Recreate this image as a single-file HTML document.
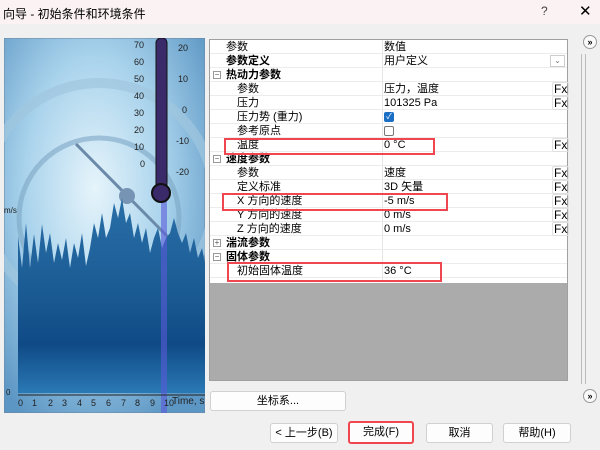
<!DOCTYPE html>
<html><head><meta charset="utf-8"><style>
*{margin:0;padding:0;box-sizing:border-box}
body{width:600px;height:450px;background:#f0f0f0;font-family:"Liberation Sans","Noto Sans CJK SC",sans-serif;font-size:11px;color:#000;position:relative;overflow:hidden}
.abs{position:absolute}
.title{left:0;top:0;width:600px;height:24px;background:#fbf3f3}
.grid{left:209px;top:39px;width:359px;height:342px;background:#fff;border:1px solid #a0a0a0}
.row{position:absolute;left:0;width:357px;height:14px;border-bottom:1px solid #ececec;line-height:14px}
.row .n{position:absolute;left:16px}
.row .v{position:absolute;left:174px}
.fx{position:absolute;left:342px;top:0;font-size:12px;line-height:13px;border:1px solid #e0e0e0;border-radius:2px;padding:0 1px;height:14px}
.col{position:absolute;left:172px;top:0;width:1px;height:240px;background:#e6e6e6}
.gray{position:absolute;left:0;top:243px;width:357px;height:97px;background:#ababab}
.b{font-weight:bold}
.btn{position:absolute;background:#fdfdfd;border:1px solid #d0d0d0;border-radius:3px;text-align:center;line-height:19px;font-size:11px}
.red{position:absolute;border:2px solid #f0464f}
.pm{position:absolute;left:3px;top:3px;width:8px;height:8px;border:1px solid #999;font-size:8px;line-height:6px;text-align:center;color:#555}
.circ{position:absolute;width:14px;height:14px;border:1px solid #999;border-radius:50%;font-size:9px;line-height:12px;text-align:center;background:#fafafa;font-weight:bold}
</style></head><body>
<div class="abs title"></div>
<div class="abs" style="left:3px;top:5px;font-size:12px">向导 - 初始条件和环境条件</div>
<div class="abs" style="left:541px;top:4px;font-size:12px;color:#444">?</div>
<div class="abs" style="left:579px;top:2px;font-size:15px">✕</div>

<svg class="abs" style="left:4px;top:38px" width="201" height="375" viewBox="0 0 201 375">
<defs>
<radialGradient id="g" cx="0.45" cy="0.4" r="0.7"><stop offset="0" stop-color="#e6f4fb"/><stop offset="0.5" stop-color="#a9d3ec"/><stop offset="1" stop-color="#5c96c4"/></radialGradient>
<linearGradient id="d" x1="0" y1="0" x2="0" y2="1"><stop offset="0" stop-color="#2a6fa8"/><stop offset="0.5" stop-color="#1a5a93"/><stop offset="0.75" stop-color="#0f4a86"/><stop offset="1" stop-color="#2a79b5"/></linearGradient>
</defs>
<rect width="201" height="375" fill="url(#g)"/>
<rect x="0" y="0" width="201" height="375" fill="none" stroke="#6b86a0"/>
<circle cx="95" cy="160" r="115" fill="none" stroke="#9fc6de" stroke-width="10" opacity=".7"/>
<circle cx="95" cy="180" r="80" fill="none" stroke="#7da6c4" stroke-width="5" opacity=".6"/>
<line x1="72" y1="106" x2="165" y2="200" stroke="#6b8aaa" stroke-width="3"/>
<circle cx="123" cy="158" r="8" fill="#7894b4"/>
<path d="M14 230 L14 198 L18 230 L22 185 L26 230 L30 196 L34 225 L38 186 L42 215 L46 195 L50 225 L54 205 L58 222 L62 200 L66 230 L70 205 L74 220 L78 195 L82 228 L86 210 L90 185 L94 200 L98 175 L102 200 L106 190 L110 165 L114 180 L118 160 L122 185 L126 175 L130 200 L134 185 L138 205 L142 190 L146 215 L150 200 L154 190 L158 210 L162 200 L166 195 L170 180 L174 195 L178 205 L182 195 L186 215 L190 200 L194 220 L198 210 L201 225 L201 355 L14 355 Z" fill="url(#d)"/>
<rect x="157" y="0" width="6" height="375" fill="#5a5ad8" opacity=".6"/>
<rect x="152" y="0" width="11" height="152" rx="5" fill="#3a2a6a" stroke="#111"/>
<circle cx="157" cy="155" r="9" fill="#3a2a6a" stroke="#111" stroke-width="2"/>
<g font-size="9" fill="#222" font-family="Liberation Sans">
<text x="130" y="10">70</text><text x="130" y="27">60</text><text x="130" y="44">50</text><text x="130" y="61">40</text><text x="130" y="78">30</text><text x="130" y="95">20</text><text x="130" y="112">10</text><text x="136" y="129">0</text>
<text x="174" y="13">20</text><text x="174" y="44">10</text><text x="178" y="75">0</text><text x="172" y="106">-10</text><text x="172" y="137">-20</text>
<text x="0" y="175" font-size="8">m/s</text>
<text x="2" y="357" font-size="8">0</text><text x="28" y="368">1</text><text x="44" y="368">2</text><text x="58" y="368">3</text><text x="73" y="368">4</text><text x="87" y="368">5</text><text x="102" y="368">6</text><text x="117" y="368">7</text><text x="131" y="368">8</text><text x="146" y="368">9</text><text x="160" y="368">10</text>
<text x="14" y="368">0</text><text x="168" y="366" font-size="10">Time, s</text>
</g>
<line x1="14" y1="357" x2="201" y2="357" stroke="#222"/>
</svg>

<div class="abs grid">
<div class="col"></div>
<div class="row" style="top:0"><span class="n">参数</span><span class="v">数值</span></div>
<div class="row" style="top:14px"><span class="n b">参数定义</span><span class="v">用户定义</span><span style="position:absolute;left:340px;top:1px;width:15px;height:12px;border:1px solid #ccc;font-size:8px;text-align:center;line-height:10px;color:#777">⌄</span></div>
<div class="row" style="top:28px"><span class="pm">−</span><span class="n b">热动力参数</span></div>
<div class="row" style="top:42px"><span class="n" style="left:27px">参数</span><span class="v">压力，温度</span><span class="fx">Fx</span></div>
<div class="row" style="top:56px"><span class="n" style="left:27px">压力</span><span class="v">101325 Pa</span><span class="fx">Fx</span></div>
<div class="row" style="top:70px"><span class="n" style="left:27px">压力势 (重力)</span><span style="position:absolute;left:174px;top:2px;width:10px;height:10px;background:#1a6fc4;border-radius:2px;color:#fff;font-size:8px;line-height:10px;text-align:center">✓</span></div>
<div class="row" style="top:84px"><span class="n" style="left:27px">参考原点</span><span style="position:absolute;left:174px;top:2px;width:10px;height:10px;border:1px solid #777;border-radius:2px"></span></div>
<div class="row" style="top:98px"><span class="n" style="left:27px">温度</span><span class="v">0 °C</span><span class="fx">Fx</span></div>
<div class="row" style="top:112px"><span class="pm">−</span><span class="n b">速度参数</span></div>
<div class="row" style="top:126px"><span class="n" style="left:27px">参数</span><span class="v">速度</span><span class="fx">Fx</span></div>
<div class="row" style="top:140px"><span class="n" style="left:27px">定义标准</span><span class="v">3D 矢量</span><span class="fx">Fx</span></div>
<div class="row" style="top:154px"><span class="n" style="left:27px">X 方向的速度</span><span class="v">-5 m/s</span><span class="fx">Fx</span></div>
<div class="row" style="top:168px"><span class="n" style="left:27px">Y 方向的速度</span><span class="v">0 m/s</span><span class="fx">Fx</span></div>
<div class="row" style="top:182px"><span class="n" style="left:27px">Z 方向的速度</span><span class="v">0 m/s</span><span class="fx">Fx</span></div>
<div class="row" style="top:196px"><span class="pm">+</span><span class="n b">湍流参数</span></div>
<div class="row" style="top:210px"><span class="pm">−</span><span class="n b">固体参数</span></div>
<div class="row" style="top:224px"><span class="n" style="left:27px">初始固体温度</span><span class="v">36 °C</span></div>
<div class="gray"></div>
</div>

<div class="red" style="left:224px;top:138px;width:211px;height:17px"></div>
<div class="red" style="left:222px;top:193px;width:226px;height:18px"></div>
<div class="red" style="left:227px;top:262px;width:215px;height:20px"></div>

<div class="abs" style="left:581px;top:54px;width:1px;height:330px;background:#bbb"></div>
<div class="abs" style="left:585px;top:54px;width:1px;height:330px;background:#bbb"></div>
<div class="circ" style="left:583px;top:35px">»</div>
<div class="circ" style="left:583px;top:389px">»</div>

<div class="btn" style="left:210px;top:391px;width:136px;height:20px">坐标系...</div>
<div class="btn" style="left:270px;top:423px;width:68px;height:20px">&lt; 上一步(B)</div>
<div class="btn" style="left:348px;top:421px;width:66px;height:23px;border:2px solid #f0464f;line-height:19px">完成(F)</div>
<div class="btn" style="left:426px;top:423px;width:67px;height:20px">取消</div>
<div class="btn" style="left:503px;top:423px;width:68px;height:20px">帮助(H)</div>
</body></html>
